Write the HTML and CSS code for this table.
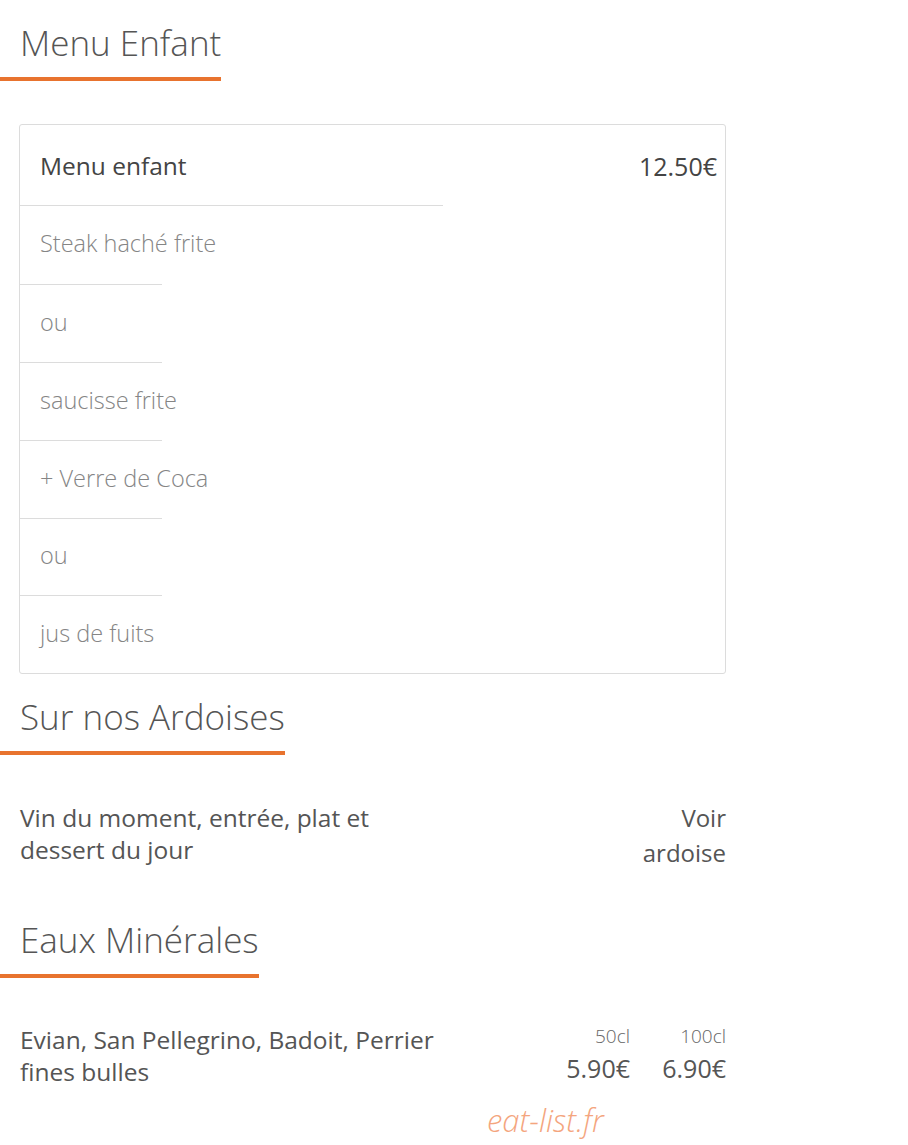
FILE: index.html
```html
<!DOCTYPE html>
<html lang="fr">
<head>
<meta charset="utf-8">
<title>Menu Enfant</title>
<link rel="stylesheet" href="styles.css">
</head>
<body>
<main class="page">
  <section class="section">
    <h2 class="section-title">Menu Enfant</h2>
    <div class="card">
      <div class="card-head">
        <div class="card-name">Menu enfant</div>
        <div class="card-price">12.50€</div>
      </div>
      <div class="card-line">Steak haché frite</div>
      <div class="card-line">ou</div>
      <div class="card-line">saucisse frite</div>
      <div class="card-line">+ Verre de Coca</div>
      <div class="card-line">ou</div>
      <div class="card-line">jus de fuits</div>
    </div>
  </section>

  <section class="section">
    <h2 class="section-title">Sur nos Ardoises</h2>
    <div class="item item-ardoise">
      <div class="item-name">Vin du moment, entrée, plat et dessert du jour</div>
      <div class="item-prices">
        <div class="price-col"><div class="price-note">Voir ardoise</div></div>
      </div>
    </div>
  </section>

  <section class="section">
    <h2 class="section-title">Eaux Minérales</h2>
    <div class="item item-eaux">
      <div class="item-name">Evian, San Pellegrino, Badoit, Perrier fines bulles</div>
      <div class="item-prices">
        <div class="price-col"><div class="price-size">50cl</div><div class="price-value">5.90€</div></div>
        <div class="price-col"><div class="price-size">100cl</div><div class="price-value">6.90€</div></div>
      </div>
    </div>
  </section>

  <footer class="brand">eat-list.fr</footer>
</main>
</body>
</html>
```

FILE: styles.css
```css
* { box-sizing: border-box; }
html, body { margin: 0; padding: 0; background: #fff; }
body {
  font-family: "Open Sans", "Liberation Sans", sans-serif;
  color: #555;
}
.page {
  width: 746px;
  padding-top: 19px;
}
.section-title {
  display: inline-block;
  margin: 0;
  padding: 0 0 10px 20px;
  font-size: 35px;
  line-height: 48px;
  font-weight: 300;
  color: #555;
  border-bottom: 4px solid #e8732e;
}
.card {
  margin: 43px 0 19px 19px;
  width: 707px;
  border: 1px solid #dcdcdc;
  border-radius: 3px;
}
.card-head {
  display: flex;
  height: 81px;
}
.card-name {
  width: 60%;
  padding-left: 20px;
  display: flex;
  align-items: center;
  font-size: 24.5px;
  color: #444;
  border-bottom: 1px solid #dcdcdc;
}
.card-price {
  flex: 1;
  padding-right: 8px;
  display: flex;
  align-items: center;
  justify-content: flex-end;
  font-size: 25px;
  color: #444;
}
.card-line {
  width: 142px;
  height: 78px;
  padding: 0 0 4px 20px;
  display: flex;
  align-items: center;
  white-space: nowrap;
  font-size: 23.5px;
  font-weight: 300;
  color: #858585;
  border-bottom: 1px solid #dcdcdc;
}
.card-head + .card-line { height: 79px; }
.card-line:nth-child(6) { height: 77px; }
.card-line:last-child { border-bottom: none; height: 77px; }
.item {
  display: flex;
  justify-content: space-between;
  margin-left: 20px;
  width: 706px;
}
.item-ardoise { margin-top: 47px; margin-bottom: 46px; }
.item-eaux { margin-top: 46px; }
.item-name {
  width: 60%;
  font-size: 24.5px;
  line-height: 32px;
  color: #555;
}
.item-prices {
  display: flex;
}
.price-col {
  width: 96px;
  text-align: right;
}
.price-note {
  font-size: 24px;
  line-height: 35px;
  margin-top: -2px;
  color: #555;
}
.price-size {
  font-size: 19px;
  font-weight: 300;
  line-height: 26px;
  color: #666;
  margin-top: -1px;
}
.price-value {
  font-size: 25px;
  line-height: 34px;
  color: #555;
  margin-top: 2px;
}
.brand {
  margin: 12px 0 0 487px;
  font-size: 31px;
  font-style: italic;
  font-weight: 300;
  color: #f4a57e;
  line-height: 40px;
}
```
